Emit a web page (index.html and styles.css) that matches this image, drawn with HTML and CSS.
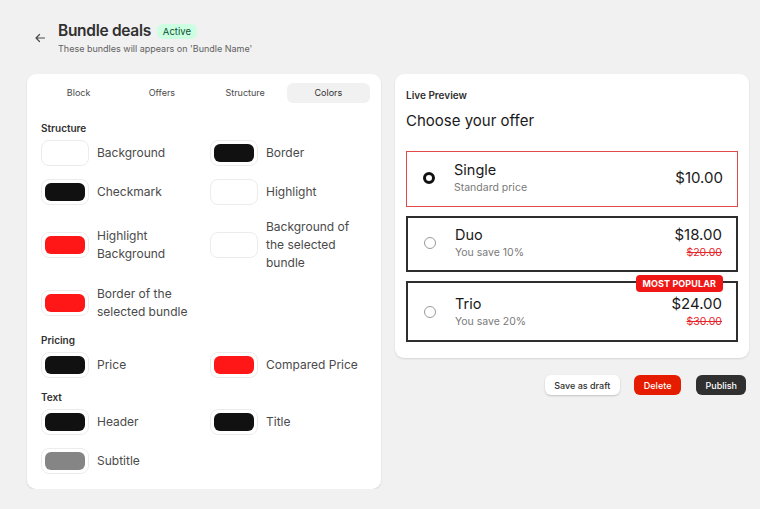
FILE: index.html
```html
<!DOCTYPE html>
<html lang="en">
<head>
    <meta charset="UTF-8">
    <meta name="viewport" content="width=device-width, initial-scale=1.0">
    <title>Bundle deals</title>
    <link rel="stylesheet" href="styles.css">
</head>
<body>
    <div class="page">
      <div class="topbar">
        <span class="back">
          <svg width="12" height="12" viewBox="0 0 12 12"><path d="M10.5 6H2M5.5 2.5L2 6l3.5 3.5" fill="none" stroke="#4a4a4a" stroke-width="1.2" stroke-linecap="round" stroke-linejoin="round"/></svg>
        </span>
        <div>
          <div class="titlerow">
            <h1>Bundle deals</h1>
            <span class="badge">Active</span>
          </div>
          <div class="subtitle">These bundles will appears on 'Bundle Name'</div>
        </div>
      </div>

      <div class="main">
        <div class="card settings">
          <div class="tabs">
            <div class="tab">Block</div>
            <div class="tab">Offers</div>
            <div class="tab">Structure</div>
            <div class="tab selected">Colors</div>
          </div>

          <div class="section first">
            <div class="label">Structure</div>
            <div class="grid">
              <div class="item"><span class="swatch"><i class="white"></i></span><span>Background</span></div>
              <div class="item"><span class="swatch"><i class="black"></i></span><span>Border</span></div>
              <div class="item"><span class="swatch"><i class="black"></i></span><span>Checkmark</span></div>
              <div class="item"><span class="swatch"><i class="white"></i></span><span>Highlight</span></div>
              <div class="item"><span class="swatch"><i class="red"></i></span><span>Highlight<br>Background</span></div>
              <div class="item"><span class="swatch"><i class="white"></i></span><span>Background of<br>the selected<br>bundle</span></div>
              <div class="item"><span class="swatch"><i class="red"></i></span><span>Border of the<br>selected bundle</span></div>
            </div>
          </div>

          <div class="section">
            <div class="label">Pricing</div>
            <div class="grid">
              <div class="item"><span class="swatch"><i class="black"></i></span><span>Price</span></div>
              <div class="item"><span class="swatch"><i class="red"></i></span><span>Compared Price</span></div>
            </div>
          </div>

          <div class="section">
            <div class="label">Text</div>
            <div class="grid">
              <div class="item"><span class="swatch"><i class="black"></i></span><span>Header</span></div>
              <div class="item"><span class="swatch"><i class="black"></i></span><span>Title</span></div>
              <div class="item"><span class="swatch"><i class="gray"></i></span><span>Subtitle</span></div>
            </div>
          </div>
        </div>

        <div class="side">
          <div class="card preview">
            <div class="preview-label">Live Preview</div>
            <div class="preview-title">Choose your offer</div>

            <div class="offer active">
              <span class="radio checked"></span>
              <div class="offer-text">
                <div class="offer-name">Single</div>
                <div class="offer-sub">Standard price</div>
              </div>
              <div class="offer-price">
                <div class="price">$10.00</div>
              </div>
            </div>

            <div class="offer">
              <span class="radio"></span>
              <div class="offer-text">
                <div class="offer-name">Duo</div>
                <div class="offer-sub">You save 10%</div>
              </div>
              <div class="offer-price">
                <div class="price">$18.00</div>
                <div class="compare">$20.00</div>
              </div>
            </div>

            <div class="offer tall">
              <span class="popular">MOST POPULAR</span>
              <span class="radio"></span>
              <div class="offer-text">
                <div class="offer-name">Trio</div>
                <div class="offer-sub">You save 20%</div>
              </div>
              <div class="offer-price">
                <div class="price">$24.00</div>
                <div class="compare">$30.00</div>
              </div>
            </div>
          </div>

          <div class="actions">
            <button class="btn draft">Save as draft</button>
            <button class="btn delete">Delete</button>
            <button class="btn publish">Publish</button>
          </div>
        </div>
      </div>
    </div>
</body>
</html>
```

FILE: styles.css
```css
*{
box-sizing: border-box;
}

body{
margin: 0;
background: #f1f1f1;
font-family: Inter, "Noto Sans", sans-serif;
color: #303030;
}

.page{
padding: 21px 0 0 27px;
}

.topbar{
display: flex;
align-items: flex-start;
margin-left: 7px;
}

.back{
display: inline-block;
width: 12px;
height: 12px;
margin: 7px 12px 0 0;
}

.titlerow{
display: flex;
align-items: center;
}

h1{
margin: 0;
font-size: 15.5px;
font-weight: 600;
letter-spacing: -0.3px;
color: #303030;
line-height: 20px;
}

.badge{
margin-left: 6px;
background: #cdfee1;
color: #0c5132;
font-size: 9.5px;
padding: 1px 6px;
border-radius: 6px;
line-height: 13px;
}

.subtitle{
font-size: 9px;
color: #616161;
margin-top: 2px;
}

.main{
display: flex;
gap: 14px;
margin-top: 20px;
}

.card{
background: #fff;
border-radius: 9px;
box-shadow: 0 1px 2px rgba(0,0,0,0.12);
}

.settings{
width: 354px;
padding: 9px 14px 15px 14px;
}

.tabs{
display: grid;
grid-template-columns: repeat(4, 1fr);
margin: 0 -3px 0 -4px;
}

.tab{
text-align: center;
font-size: 9px;
line-height: 20px;
color: #4a4a4a;
border-radius: 6px;
}

.tab.selected{
background: #f1f1f1;
color: #303030;
}

.section{
margin-top: 12px;
}

.section.first{
margin-top: 18px;
}

.label{
font-size: 10px;
font-weight: 600;
line-height: 14px;
margin-bottom: 5px;
}

.grid{
display: grid;
grid-template-columns: 169px 1fr;
row-gap: 13px;
}

.item{
display: flex;
align-items: center;
gap: 8px;
font-size: 12px;
line-height: 18px;
color: #4a4a4a;
}

.swatch{
flex: none;
width: 48px;
height: 26px;
border: 1px solid #ececec;
border-radius: 8px;
padding: 3px;
background: #fff;
}

.swatch i{
display: block;
width: 100%;
height: 100%;
border-radius: 6px;
}

.swatch .white{ background: #fff; }
.swatch .black{ background: #111; }
.swatch .red{ background: #ff1717; }
.swatch .gray{ background: #858585; }

.side{
width: 354px;
}

.preview{
padding: 14px 11px 16px 11px;
}

.preview-label{
font-size: 10px;
font-weight: 600;
line-height: 14px;
}

.preview-title{
font-size: 15px;
line-height: 20px;
color: #1a1a1a;
margin-top: 9px;
margin-bottom: 20px;
}

.offer{
position: relative;
display: flex;
align-items: center;
height: 56px;
border: 2px solid #2e2e2e;
padding: 0 14px 2px 16px;
margin-bottom: 9px;
}

.offer:last-child{
margin-bottom: 0;
}

.offer.active{
border-color: #e24a4a;
border-width: 1.5px;
}

.offer.tall{
height: 61px;
padding-top: 2px;
}

.radio{
width: 12px;
height: 12px;
border-radius: 50%;
border: 1px solid #9a9a9a;
flex: none;
}

.radio.checked{
border: 3px solid #111;
}

.offer-text{
flex: 1;
margin-left: 19px;
}

.offer-name{
font-size: 14.5px;
line-height: 20px;
color: #1a1a1a;
}

.offer-sub{
font-size: 10.5px;
line-height: 16px;
color: #7a7a7a;
}

.offer-price{
text-align: right;
}

.price{
font-size: 15px;
line-height: 20px;
color: #1a1a1a;
}

.compare{
font-size: 10.5px;
line-height: 16px;
color: #e5262b;
text-decoration: line-through;
}

.popular{
position: absolute;
top: -8px;
right: 13px;
background: #f01616;
color: #fff;
font-size: 9px;
font-weight: 700;
line-height: 17px;
padding: 0 7px;
border-radius: 4px;
letter-spacing: 0.1px;
}

.actions{
display: flex;
justify-content: flex-end;
gap: 14px;
margin-top: 17px;
margin-right: 3px;
}

.btn{
font-family: Inter, "Noto Sans", sans-serif;
font-size: 9px;
font-weight: 500;
height: 20px;
padding: 0 9px;
border-radius: 6px;
border: none;
}

.draft{
background: #fff;
color: #303030;
padding: 0 9.5px;
box-shadow: 0 1px 2px rgba(0,0,0,0.2);
}

.delete{
background: #e51c00;
color: #fff;
padding: 0 10px;
margin-right: 1px;
}

.publish{
background: #303030;
color: #fff;
}
```
